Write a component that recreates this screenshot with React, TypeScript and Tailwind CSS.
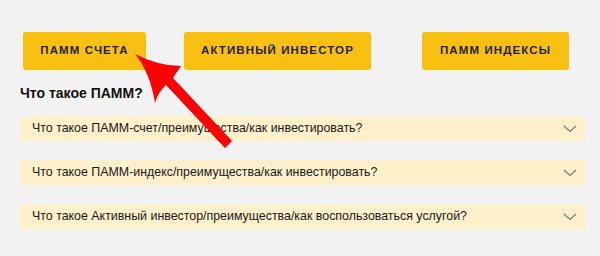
const questions = [
  "Что такое ПАММ-счет/преимущества/как инвестировать?",
  "Что такое ПАММ-индекс/преимущества/как инвестировать?",
  "Что такое Активный инвестор/преимущества/как воспользоваться услугой?",
];

const Chevron = () => (
  <svg width="14" height="8" viewBox="0 0 14 8" fill="none" className="mr-[8px]">
    <path d="M1 1l6 5.5L13 1" stroke="#777" strokeWidth="1.1" />
  </svg>
);

const App = () => {
  return (
    <div
      className="relative w-[600px] h-[256px] bg-[#f2f2f2] overflow-hidden"
      style={{ fontFamily: '"Liberation Sans", Arial, sans-serif' }}
    >
      <div className="flex pt-[32px] pl-[23px]">
        <button className="w-[123px] h-[38px] bg-[#f8c112] rounded-[3px] text-[11.5px] font-bold tracking-[1.1px] text-[#222]">
          ПАММ СЧЕТА
        </button>
        <button className="ml-[38px] w-[187px] h-[38px] bg-[#f8c112] rounded-[3px] text-[11.5px] font-bold tracking-[1.1px] text-[#222]">
          АКТИВНЫЙ ИНВЕСТОР
        </button>
        <button className="ml-[51px] w-[147px] h-[38px] bg-[#f8c112] rounded-[3px] text-[11.5px] font-bold tracking-[1.1px] text-[#222]">
          ПАММ ИНДЕКСЫ
        </button>
      </div>
      <div className="pl-[20px] pr-[15px]">
        <h2 className="mt-[14px] text-[14px] leading-[18px] font-bold text-[#111]">Что такое ПАММ?</h2>
        <div className="mt-[14px] flex flex-col gap-[19px]">
          {questions.map((q) => (
            <div key={q} className="h-[25px] bg-[#fdf0cb] flex items-center justify-between pl-[12px]">
              <span className="text-[12.4px] text-[#1a1a1a]">{q}</span>
              <Chevron />
            </div>
          ))}
        </div>
      </div>
      <svg className="absolute left-0 top-0" width="600" height="256" viewBox="0 0 600 256">
        <path
          d="M135 54 Q150 72 155 103 Q158 92 166 85 L225 148 L232 141 L173 78 Q178 70 181 66 Q158 66 135 54 Z"
          fill="#f00"
        />
      </svg>
    </div>
  );
};

export default App;
